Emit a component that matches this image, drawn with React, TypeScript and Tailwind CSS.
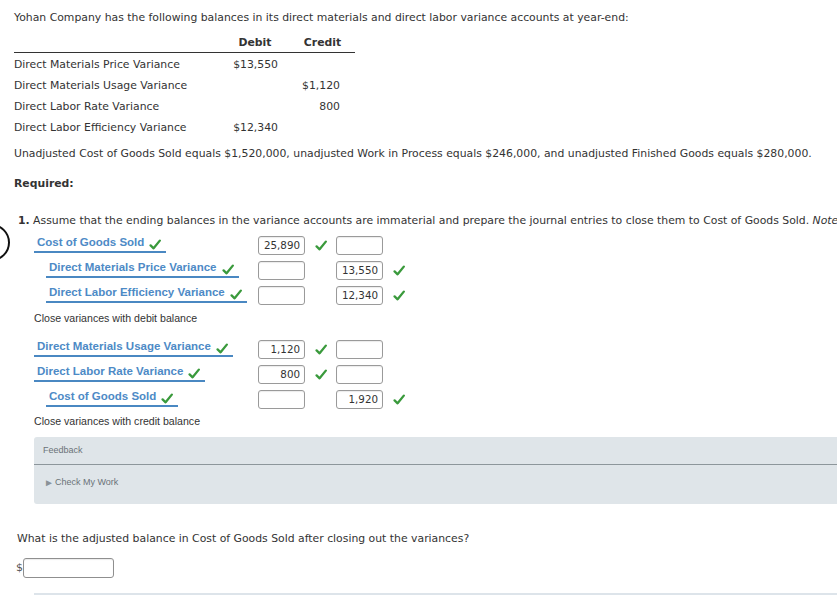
import React from 'react';

const Check = ({ className = '' }: { className?: string }) => (
  <svg viewBox="0 0 12 11" className={`w-[12px] h-[11px] ${className}`}>
    <path d="M1.6 6.4 L4.6 9.3 L10.8 1.6" fill="none" stroke="#3a9a3c" strokeWidth="2.3" strokeLinecap="round" strokeLinejoin="round" />
  </svg>
);

const Box = ({ value }: { value?: string }) => (
  <div className="w-[47px] h-[19px] mt-[2px] border border-[#9a9a9a] rounded-[3px] bg-white shadow-[inset_0_1px_1px_rgba(0,0,0,0.08)] flex items-center justify-end pr-[4px] text-[10.3px] text-[#333] font-['DejaVu_Sans',sans-serif]">
    {value}
  </div>
);

type Row = { account: string; indent?: boolean; debit?: string; credit?: string };

const JournalRow = ({ account, indent, debit, credit }: Row) => (
  <div className="flex h-[25px] items-start">
    <div className={`w-[224px] ${indent ? 'pl-[12px]' : ''}`}>
      <div className="inline-flex items-end gap-[5px] mt-[1px] pl-[3px] pr-[5px] pb-[1px] border-b-2 border-[#4a88c2] leading-[15px] text-[11.5px] font-bold text-[#4d8ac6] font-['Liberation_Sans',sans-serif]">
        <span>{account}</span>
        <Check />
      </div>
    </div>
    <Box value={debit} />
    <div className="w-[31px] flex justify-center pt-[6px]">{debit && <Check />}</div>
    <Box value={credit} />
    <div className="w-[31px] flex justify-center pt-[6px]">{credit && <Check />}</div>
  </div>
);

export default function App() {
  const varianceRows = [
    { name: 'Direct Materials Price Variance', debit: '$13,550', credit: '' },
    { name: 'Direct Materials Usage Variance', debit: '', credit: '$1,120' },
    { name: 'Direct Labor Rate Variance', debit: '', credit: '800' },
    { name: 'Direct Labor Efficiency Variance', debit: '$12,340', credit: '' },
  ];

  return (
    <div className="w-[837px] h-[595px] overflow-hidden bg-white text-[#333] font-['DejaVu_Sans',sans-serif] text-[10.85px]">
      <div className="w-[1100px] pl-[14px] pt-[10px]">
        <p className="leading-[16px]">
          Yohan Company has the following balances in its direct materials and direct labor variance accounts at year-end:
        </p>

        {/* balances table */}
        <div className="mt-[8px] w-[341px]">
          <div className="flex h-[19px] items-center border-b border-[#333] font-bold">
            <div className="w-[206px]" />
            <div className="w-[70px] text-center">Debit</div>
            <div className="w-[65px] text-center">Credit</div>
          </div>
          <div className="pt-[1px]">
            {varianceRows.map((r) => (
              <div key={r.name} className="flex h-[21.3px] items-center">
                <div className="w-[206px]">{r.name}</div>
                <div className="w-[70px] text-right pr-[12px]">{r.debit}</div>
                <div className="w-[65px] text-right pr-[15px]">{r.credit}</div>
              </div>
            ))}
          </div>
        </div>

        <p className="mt-[7px] leading-[16px]">
          Unadjusted Cost of Goods Sold equals $1,520,000, unadjusted Work in Process equals $246,000, and unadjusted Finished Goods equals $280,000.
        </p>
        <p className="mt-[14px] leading-[16px] font-bold">Required:</p>
        <p className="mt-[21px] pl-[4px] leading-[16px] whitespace-nowrap">
          <b>1.</b> Assume that the ending balances in the variance accounts are immaterial and prepare the journal entries to close them to Cost of Goods Sold. <i>Note</i>
        </p>
      </div>

      <div className="relative">
        <div className="absolute left-[-27px] top-[-5px] w-[37px] h-[37px] rounded-full border-2 border-[#111]" />
      </div>

      {/* journal entries */}
      <div className="pl-[34px] mt-[5px]">
        <JournalRow account="Cost of Goods Sold" debit="25,890" />
        <JournalRow account="Direct Materials Price Variance" indent credit="13,550" />
        <JournalRow account="Direct Labor Efficiency Variance" indent credit="12,340" />
        <p className="mt-[2px] leading-[14px] text-[10.6px] font-['Liberation_Sans',sans-serif] text-[#333]">Close variances with debit balance</p>

        <div className="mt-[13px]">
          <JournalRow account="Direct Materials Usage Variance" debit="1,120" />
          <JournalRow account="Direct Labor Rate Variance" debit="800" />
          <JournalRow account="Cost of Goods Sold" indent credit="1,920" />
        </div>
        <p className="mt-[1px] leading-[14px] text-[10.6px] font-['Liberation_Sans',sans-serif] text-[#333]">Close variances with credit balance</p>

        {/* feedback */}
        <div className="mt-[9px] w-[900px] h-[67px] rounded-[3px] bg-[#dfe5e9] font-['Liberation_Sans',sans-serif] text-[9px] text-[#6b7378]">
          <div className="h-[28px] pl-[9px] pt-[1px] flex items-center border-b border-[#8d969b]">Feedback</div>
          <div className="pl-[10px] pt-[11px] flex items-center gap-[1px]">
            <span className="text-[10px] leading-[10px] text-[#8a9297]">&#9658;</span>
            <span>Check My Work</span>
          </div>
        </div>
      </div>

      <p className="mt-[27px] pl-[17px] leading-[16px]">
        What is the adjusted balance in Cost of Goods Sold after closing out the variances?
      </p>
      <div className="mt-[11px] pl-[16px] flex items-center">
        <span className="text-[11px] text-[#555]">$</span>
        <div className="w-[91px] h-[20px] border border-[#8f8f8f] rounded-[3px] bg-white shadow-[inset_0_1px_1px_rgba(0,0,0,0.08)]" />
      </div>
      <div className="ml-[34px] mt-[15px] border-t-2 border-[#dde4ea]" />
    </div>
  );
}
